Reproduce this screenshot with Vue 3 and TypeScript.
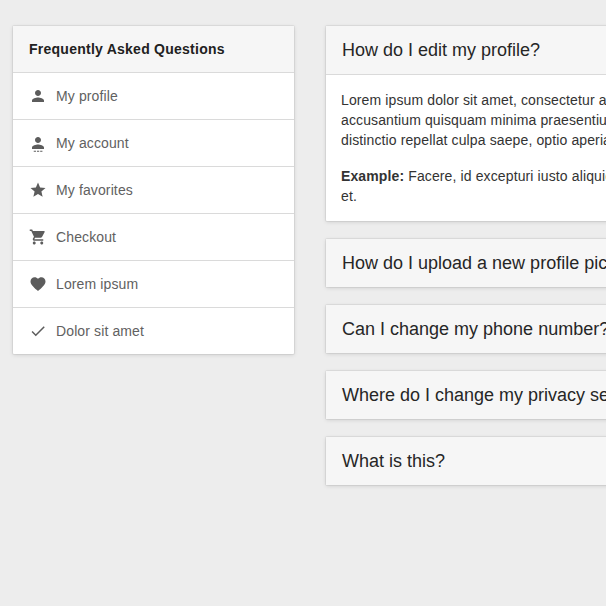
<script setup lang="ts">
interface Topic {
  label: string
  paths: string[]
}

interface Question {
  title: string
  open?: boolean
}

const person = 'M12 12c2.21 0 4-1.79 4-4s-1.790-4-4-4-4 1.790-4 4 1.790 4 4 4zm0 2c-2.670 0-8 1.340-8 4v2h16v-2c0-2.660-5.330-4-8-4z'

const topics: Topic[] = [
  { label: 'My profile', paths: [person] },
  { label: 'My account', paths: [person, 'M6.300 22.200h3v1.300h-3zM10.600 22.200h3v1.300h-3zM14.900 22.200h3v1.300h-3z'] },
  { label: 'My favorites', paths: ['M12 17.27L18.18 21l-1.64-7.03L22 9.24l-7.19-.61L12 2 9.190 8.63 2 9.240l5.460 4.730L5.820 21z'] },
  {
    label: 'Checkout',
    paths: [
      'M7 18c-1.100 0-1.990.9-1.990 2S5.900 22 7 22s2-.9 2-2-.9-2-2-2zM1 2v2h2l3.600 7.590-1.350 2.450c-.16.28-.25.61-.25.96 0 1.100.9 2 2 2h12v-2H7.420c-.14 0-.25-.11-.25-.25l.03-.12.9-1.630h7.450c.75 0 1.410-.41 1.750-1.030l3.580-6.490c.08-.14.12-.31.12-.48 0-.55-.45-1-1-1H5.210l-.94-2H1zM17 18c-1.100 0-1.990.9-1.990 2s.89 2 1.990 2 2-.9 2-2-.9-2-2-2z',
    ],
  },
  {
    label: 'Lorem ipsum',
    paths: ['M12 21.350l-1.450-1.320C5.400 15.360 2 12.280 2 8.500 2 5.420 4.420 3 7.500 3c1.740 0 3.410.81 4.500 2.090C13.090 3.810 14.760 3 16.500 3 19.580 3 22 5.420 22 8.500c0 3.780-3.400 6.860-8.550 11.540L12 21.350z'],
  },
  { label: 'Dolor sit amet', paths: ['M9 16.170L4.830 12l-1.420 1.410L9 19 21 7l-1.410-1.410z'] },
]

const questions: Question[] = [
  { title: 'How do I edit my profile?', open: true },
  { title: 'How do I upload a new profile picture?' },
  { title: 'Can I change my phone number?' },
  { title: 'Where do I change my privacy settings?' },
  { title: 'What is this?' },
]
</script>

<template>
  <main class="page">
    <nav class="card sidebar">
      <h2 class="sidebar-title">Frequently Asked Questions</h2>
      <a v-for="topic in topics" :key="topic.label" class="topic">
        <svg class="icon" viewBox="0 0 24 24" aria-hidden="true">
          <path v-for="d in topic.paths" :key="d" :d="d" />
        </svg>
        <span>{{ topic.label }}</span>
      </a>
    </nav>

    <section class="questions">
      <article v-for="question in questions" :key="question.title" class="card">
        <h3 class="question-title">{{ question.title }}</h3>
        <div v-if="question.open" class="answer">
          <p>
            Lorem ipsum dolor sit amet, consectetur adipisicing elit.<br />
            accusantium quisquam minima praesentium voluptatem<br />
            distinctio repellat culpa saepe, optio aperiam
          </p>
          <p>
            <strong>Example:</strong> Facere, id excepturi iusto aliquid beatae<br />
            et.
          </p>
        </div>
      </article>
    </section>
  </main>
</template>

<style>
body {
  background: #ededed;
  overflow: hidden;
}
</style>

<style scoped>
.page {
  display: flex;
  align-items: flex-start;
  gap: 32px;
  box-sizing: border-box;
  height: 606px;
  padding: 26px 0 0 13px;
  overflow: hidden;
  font: 14px/20px 'Liberation Sans', Arial, sans-serif;
  letter-spacing: 0.12px;
  color: #333;
}

.card {
  background: #fff;
  border-radius: 1px;
  box-shadow: 0 0 0 1px rgba(0, 0, 0, 0.05), 0 1px 4px rgba(0, 0, 0, 0.13);
}

.sidebar {
  flex: none;
  width: 281px;
}

.sidebar-title {
  margin: 0;
  padding: 13px 16px;
  background: #f6f6f6;
  color: #212121;
  font-size: 14px;
  font-weight: 700;
  letter-spacing: 0.25px;
}

.topic {
  display: flex;
  align-items: center;
  gap: 9px;
  height: 46px;
  padding-left: 16px;
  border-top: 1px solid #dadada;
  color: #616161;
}

.icon {
  width: 18px;
  height: 18px;
  fill: #5c5c5c;
  overflow: visible;
}

.questions {
  display: flex;
  flex: none;
  flex-direction: column;
  gap: 18px;
  width: 560px;
}

.question-title {
  margin: 0;
  padding: 14px 16px;
  background: #f6f6f6;
  color: #262626;
  font-size: 18px;
  font-weight: 400;
  letter-spacing: 0;
  white-space: nowrap;
}

.answer {
  padding: 15px;
  border-top: 1px solid #dadada;
  white-space: nowrap;
}

.answer p {
  margin: 0;
}

.answer p + p {
  margin-top: 16px;
}
</style>
